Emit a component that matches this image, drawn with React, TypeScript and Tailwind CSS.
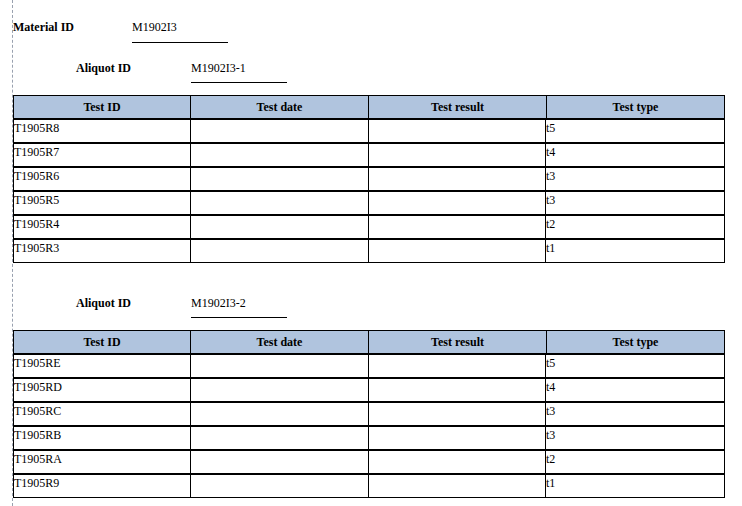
import React from "react";

type Row = { id: string; type: string };

const aliquots: { id: string; rows: Row[] }[] = [
  {
    id: "M1902I3-1",
    rows: [
      { id: "T1905R8", type: "t5" },
      { id: "T1905R7", type: "t4" },
      { id: "T1905R6", type: "t3" },
      { id: "T1905R5", type: "t3" },
      { id: "T1905R4", type: "t2" },
      { id: "T1905R3", type: "t1" },
    ],
  },
  {
    id: "M1902I3-2",
    rows: [
      { id: "T1905RE", type: "t5" },
      { id: "T1905RD", type: "t4" },
      { id: "T1905RC", type: "t3" },
      { id: "T1905RB", type: "t3" },
      { id: "T1905RA", type: "t2" },
      { id: "T1905R9", type: "t1" },
    ],
  },
];

const cols = "grid grid-cols-[176px_178px_178px_178px]";

const TestTable = ({ rows }: { rows: Row[] }) => (
  <div className="w-[712px] border border-black">
    <div className={`${cols} h-[24px] bg-[#b0c4de] border-b-2 border-black font-bold`}>
      <div className="flex items-center justify-center">Test ID</div>
      <div className="flex items-center justify-center border-l border-black">Test date</div>
      <div className="flex items-center justify-center border-l border-black">Test result</div>
      <div className="flex items-center justify-center border-l border-black">Test type</div>
    </div>
    {rows.map((r, i) => (
      <div
        key={r.id}
        className={`${cols} ${i < rows.length - 1 ? "h-[24px] border-b-2 border-black" : "h-[22px]"}`}
      >
        <div className="leading-4">{r.id}</div>
        <div className="border-l border-black"></div>
        <div className="border-l border-black"></div>
        <div className="border-l border-black leading-4 -ml-px">{r.type}</div>
      </div>
    ))}
  </div>
);

export default function App() {
  return (
    <div
      className="w-[742px] h-[506px] bg-white text-black text-[12px] overflow-hidden"
      style={{ fontFamily: '"Liberation Serif", "Times New Roman", serif' }}
    >
      <div className="ml-[12px] h-full border-l border-dashed border-gray-400 pt-[19px]">
        {/* Material */}
        <div className="flex">
          <div className="w-[119px] font-bold leading-4">Material ID</div>
          <div className="w-[96px] leading-4 pb-[7px] border-b border-black">M1902I3</div>
        </div>

        {aliquots.map((a, idx) => (
          <div key={a.id} className={idx === 0 ? "mt-[17px]" : "mt-[32px]"}>
            <div className="flex pl-[63px]">
              <div className="w-[115px] font-bold leading-4">Aliquot ID</div>
              <div className="w-[96px] leading-4 pb-[6px] border-b border-black">{a.id}</div>
            </div>
            <div className="mt-[12px]">
              <TestTable rows={a.rows} />
            </div>
          </div>
        ))}
      </div>
    </div>
  );
}
